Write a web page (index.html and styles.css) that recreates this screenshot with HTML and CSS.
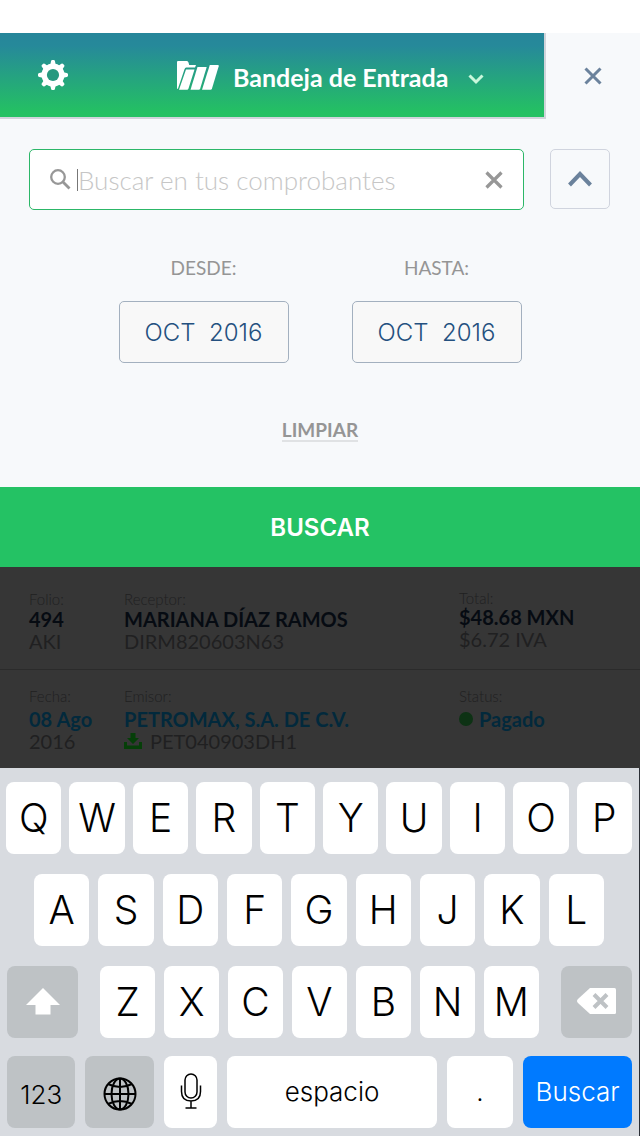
FILE: index.html
```html
<!DOCTYPE html>
<html lang="es">
<head>
<meta charset="utf-8">
<meta name="viewport" content="width=device-width, initial-scale=1">
<title>Bandeja de Entrada</title>
<link rel="stylesheet" href="styles.css">
</head>
<body>
<div class="app">
  <header class="topbar">
    <div class="topbar-main">
      <button class="plain settings" type="button" aria-label="Ajustes">
        <svg width="30" height="30" viewBox="0 0 30 30"><g fill="#fff"><path id="t" d="M12.300 5 13 1.200Q13.200 0 14.300 0h1.400q1.100 0 1.300 1.200L17.700 5v20l-.7 3.800Q16.800 30 15.700 30h-1.400q-1.100 0-1.300-1.200L12.300 25z"/><use href="#t" transform="rotate(45 15 15)"/><use href="#t" transform="rotate(90 15 15)"/><use href="#t" transform="rotate(135 15 15)"/><circle cx="15" cy="15" r="11.500"/></g><circle cx="15" cy="15" r="6.100" fill="#26997f"/></svg>
      </button>
      <button class="plain folder" type="button">
        <svg width="42" height="29" viewBox="0 0 42 29" fill="#fff"><path d="M0 1Q0 0 1 0h9q1 0 1.500 1.500L12.200 4H19l-1 2.600H9.200q-1.200 0-1.700 1.600L1 27.500 0 28z"/><path d="M9 8.500h8.500L11.500 27.500q-.4 1.300-1.500 1.300H2z"/><path d="M20.500 6h9.200L23.200 27.500q-.4 1.300-1.500 1.300H13.500z"/><path d="M32.800 4H41q1 0 .7 1.200L35 27.500q-.4 1.300-1.500 1.300H25z"/></svg>
        <span class="folder-name">Bandeja de Entrada</span>
        <svg class="folder-arrow" width="16" height="11" viewBox="0 0 16 11" fill="none" stroke="#c9f7dc" stroke-width="3"><path d="M1.500 1.500 8 8l6.500-6.500"/></svg>
      </button>
    </div>
    <button class="plain close" type="button" aria-label="Cerrar">
      <svg width="18" height="18" viewBox="0 0 18 18" stroke="#6b829c" stroke-width="3"><path d="m1.500 1.500 15 15m0-15-15 15"/></svg>
    </button>
  </header>

  <form class="search">
    <div class="search-row">
      <div class="search-box">
        <svg width="21" height="21" viewBox="0 0 21 21" fill="none" stroke="#979797"><circle cx="8" cy="8" r="6.800" stroke-width="2.300"/><path d="m13 13 6.500 6.500" stroke-width="2.800"/></svg>
        <span class="caret"></span>
        <input class="search-input" type="text" aria-label="Buscar en tus comprobantes" placeholder="Buscar en tus comprobantes">
        <button class="plain" type="button" aria-label="Borrar texto">
          <svg width="18" height="18" viewBox="0 0 18 18" stroke="#979797" stroke-width="3.200"><path d="m1.500 1.500 15 15m0-15-15 15"/></svg>
        </button>
      </div>
      <button class="collapse" type="button" aria-label="Ocultar filtros">
        <svg width="24" height="16" viewBox="0 0 24 16" fill="none" stroke="#6b829c" stroke-width="4"><path d="M1.500 14 12 3l10.500 11"/></svg>
      </button>
    </div>
    <div class="dates">
      <div class="date">
        <label class="date-label" for="from">DESDE:</label>
        <button class="date-button" id="from" type="button">OCT&nbsp; 2016</button>
      </div>
      <div class="date">
        <label class="date-label" for="to">HASTA:</label>
        <button class="date-button" id="to" type="button">OCT&nbsp; 2016</button>
      </div>
    </div>
    <a class="clear" href="#">LIMPIAR</a>
    <button class="submit" type="submit">BUSCAR</button>
  </form>

  <main class="results">
    <div class="record">
      <div><p class="label">Folio:</p><p class="value">494</p><p class="sub">AKI</p></div>
      <div><p class="label">Receptor:</p><p class="value">MARIANA DÍAZ RAMOS</p><p class="sub">DIRM820603N63</p></div>
      <div><p class="label label-total">Total:</p><p class="value">$48.68 MXN</p><p class="sub">$6.72 IVA</p></div>
    </div>
    <div class="record record-linked">
      <div><p class="label">Fecha:</p><p class="value">08 Ago</p><p class="sub">2016</p></div>
      <div><p class="label">Emisor:</p><p class="value">PETROMAX, S.A. DE C.V.</p><p class="sub with-icon"><svg width="18" height="16" viewBox="0 0 18 16" fill="#053f08"><path d="M6.500 0h5v5H15l-6 6-6-6h3.500zM0 9h3v3.500h12V9h3v7H0z"/></svg>PET040903DH1</p></div>
      <div><p class="label">Status:</p><p class="value with-icon status"><span class="dot"></span>Pagado</p></div>
    </div>
  </main>

  <section class="keyboard" aria-label="Teclado">
    <div class="keys keys-top"><button class="key" type="button">Q</button><button class="key" type="button">W</button><button class="key" type="button">E</button><button class="key" type="button">R</button><button class="key" type="button">T</button><button class="key" type="button">Y</button><button class="key" type="button">U</button><button class="key" type="button">I</button><button class="key" type="button">O</button><button class="key" type="button">P</button></div>
    <div class="keys keys-home"><button class="key" type="button">A</button><button class="key" type="button">S</button><button class="key" type="button">D</button><button class="key" type="button">F</button><button class="key" type="button">G</button><button class="key" type="button">H</button><button class="key" type="button">J</button><button class="key" type="button">K</button><button class="key" type="button">L</button></div>
    <div class="keys keys-lower">
      <button class="key key-dark" type="button" aria-label="Mayúsculas"><svg width="34" height="27" viewBox="0 0 34 27" fill="#fff"><path d="M17 0 34 17H24.500v9.500h-15V17H0z"/></svg></button>
      <div class="keys letters"><button class="key" type="button">Z</button><button class="key" type="button">X</button><button class="key" type="button">C</button><button class="key" type="button">V</button><button class="key" type="button">B</button><button class="key" type="button">N</button><button class="key" type="button">M</button></div>
      <button class="key key-dark" type="button" aria-label="Retroceso"><svg width="39" height="26" viewBox="0 0 39 26"><path d="M13 0h24.500Q39 0 39 1.500v23q0 1.500-1.500 1.500H13L1 15q-2-2 0-4z" fill="#fff"/><path d="m17 6.500 13 13m0-13-13 13" stroke="#bec2c5" stroke-width="4"/></svg></button>
    </div>
    <div class="keys keys-bottom">
      <button class="key key-dark key-word key-mode" type="button">123</button>
      <button class="key key-dark key-mode" type="button" aria-label="Idioma"><svg width="34" height="34" viewBox="0 0 34 34" fill="none" stroke="#000" stroke-width="2"><circle cx="17" cy="17" r="15.500"/><ellipse cx="17" cy="17" rx="8.500" ry="15.500"/><path d="M17 1.500v31M1.500 17h31M5 7q12 6 24 0M5 27q12-6 24 0"/></svg></button>
      <button class="key" type="button" aria-label="Dictado"><svg width="22" height="36" viewBox="0 0 22 36" fill="none" stroke="#000" stroke-width="1.500"><rect x="5" y="1" width="12" height="24" rx="6"/><path d="M1.500 12.500v6q0 9.500 9.500 9.500t9.500-9.500v-6M11 28v7M5.500 35h11"/></svg></button>
      <button class="key key-word" type="button">espacio</button>
      <button class="key key-word" type="button">.</button>
      <button class="key key-word key-search" type="button">Buscar</button>
    </div>
  </section>
</div>
</body>
</html>
```
FILE: styles.css
```css
* { box-sizing: border-box; }
body { margin: 0; background: #fff; font-family: "Lato", "Liberation Sans", sans-serif; }
p { margin: 0; }
svg { display: block; flex: none; }
button { font: inherit; color: inherit; padding: 0; }
.app { display: flex; flex-direction: column; min-height: 100vh; padding-top: 33px; }
.plain { display: flex; align-items: center; border: 0; background: none; }

.topbar { display: flex; height: 86px; background: #f7f9fb; }
.topbar-main {
  flex: 1; display: flex; align-items: center; padding-left: 38px;
  background: linear-gradient(#26869a, #26899a 15%, #24c162 95%) padding-box;
  border-right: 2px solid #d0d4da; border-bottom: 2px solid #d0d4da;
}
.folder { flex: 1; gap: 14px; padding-left: 109px; color: #fff; }
.folder-name { padding-top: 3px; font-size: 25px; font-weight: 700; line-height: 32px; }
.folder-arrow { margin: 8px 0 0 6px; }
.close { width: 94px; justify-content: center; }

.search { display: flex; flex-direction: column; align-items: center; background: #f7f9fb; padding-top: 30px; }
.search-row { align-self: stretch; display: flex; gap: 26px; padding: 0 30px 0 29px; }
.search-box {
  flex: 1; min-width: 0; height: 61px; display: flex; align-items: center; padding: 0 20px;
  background: #fff; border: 1px solid #2cb768; border-radius: 5px;
}
.caret { width: 1px; height: 22px; margin-left: 6px; background: #777; }
.search-input { flex: 1; min-width: 0; border: 0; padding: 0; outline: 0; background: none; font-family: inherit; font-size: 26px; font-weight: 300; line-height: 32px; }
.search-input::placeholder { color: #c6c6c6; opacity: 1; }
.collapse { width: 60px; height: 60px; display: flex; align-items: center; justify-content: center; background: none; border: 1px solid #d0d4de; border-radius: 5px; }

.dates { display: flex; gap: 63px; margin-top: 46px; }
.date { display: flex; flex-direction: column; align-items: center; gap: 21px; }
.date-label { font-size: 19px; line-height: 24px; color: #959595; }
.date-button { width: 170px; height: 62px; background: #f8f8f8; border: 1px solid #a3b0bf; border-radius: 5px; color: #24507f; font-family: "Inter", sans-serif; font-size: 24px; font-weight: 300; }
.clear { margin-top: 56px; font-size: 19px; font-weight: 700; line-height: 21px; color: #959595; text-decoration: none; border-bottom: 2px solid #e0e2e4; }
.submit { align-self: stretch; height: 80px; margin-top: 45px; border: 0; background: #24c264; color: #fff; font-family: "Inter", sans-serif; font-size: 24px; font-weight: 600; }

.results { background: #363636; color: #202021; }
.record { display: grid; grid-template-columns: 95px 335px 1fr; padding: 23px 0 17px 29px; }
.record + .record { border-top: 1px solid #2b2b2b; padding: 17px 0 16px 29px; }
.label { font-size: 15px; line-height: 18px; font-weight: 300; }
.label-total { line-height: 16px; }
.value { font-size: 20px; font-weight: 700; line-height: 22px; color: #060b12; }
.sub { font-size: 20px; line-height: 22px; }
.record-linked .value { color: #02293c; margin-top: 3px; }
.with-icon { display: flex; align-items: center; gap: 8px; }
.status { gap: 6px; }
.dot { width: 14px; height: 14px; border-radius: 50%; background: #0d3214; }

.keyboard { flex: 1; display: flex; flex-direction: column; gap: 20px; padding: 14px 7px 8px 6px; background: #d8dbe0; border-right: 1px solid #2b2f36; font-family: "Inter", "Liberation Sans", sans-serif; }
.keys { display: flex; gap: 8px; }
.keys-home { gap: 9px; padding: 0 28px; }
.keys-lower, .keys-bottom { display: grid; padding-left: 1px; }
.keys-lower { grid-template-columns: 71fr 438fr 71fr; gap: 22px; }
.letters { gap: 9px; }
.keys-bottom { grid-template-columns: 68fr 68fr 53fr 208fr 66fr 108fr; gap: 10px; margin-top: -2px; }
.key { flex: 1; min-width: 0; height: 72px; display: flex; align-items: center; justify-content: center; border: 0; border-radius: 8px; padding-bottom: 2px; background: #fff; color: #000; font-size: 39px; font-weight: 300; }
.key-dark { background: #bec2c5; }
.key-word { font-size: 26px; }
.key-mode { padding: 4px 0 0; }
.key-search { background: #007aff; color: #fff; }
```
